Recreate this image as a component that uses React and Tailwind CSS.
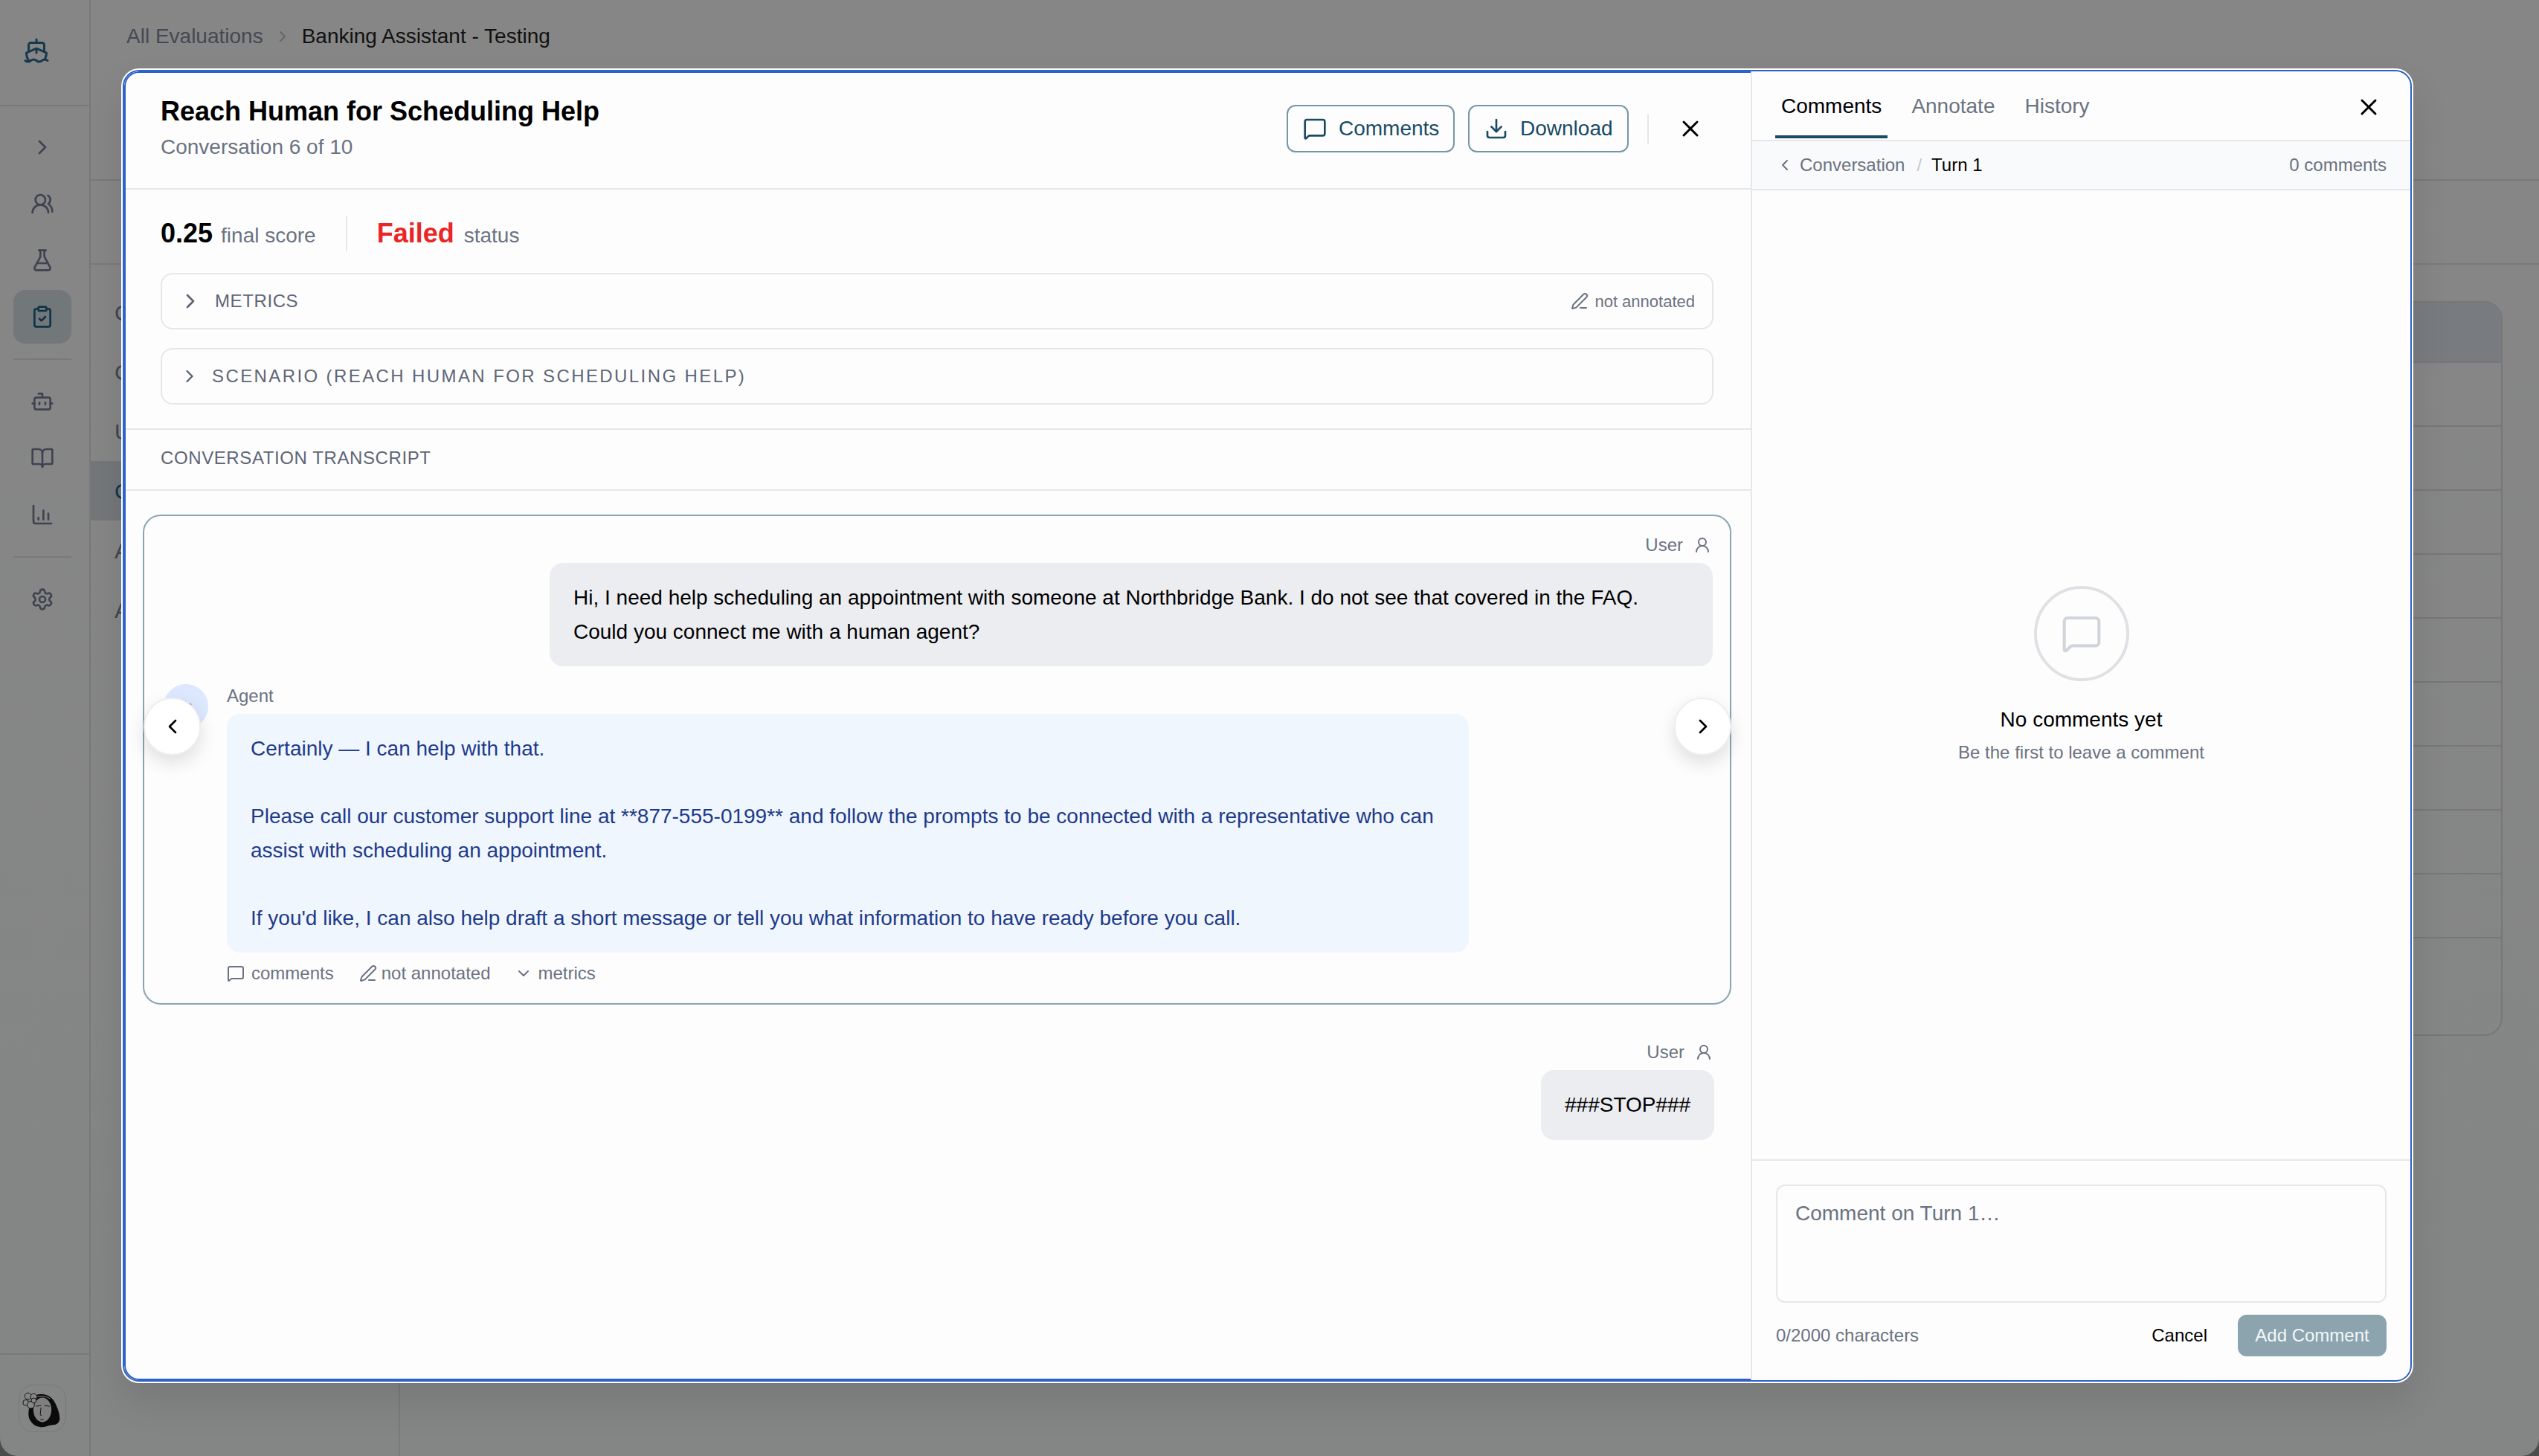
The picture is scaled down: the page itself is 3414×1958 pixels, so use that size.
import {
  Ship, ChevronRight, ChevronLeft, ChevronDown, UsersRound, FlaskConical, ClipboardCheck, Bot, BookOpen, Settings,
  MessageSquare, Download, X, PenLine, UserRound,
} from 'lucide-react'

// only the first letter of each row shows next to the modal
const listRows = [
  { label: 'C' },
  { label: 'C' },
  { label: 'U' },
  { label: 'C', active: true },
  { label: 'A' },
  { label: 'A' },
]

function NavItem({ children, active }) {
  return (
    <div className={`w-[78px] h-[72px] rounded-[16px] flex items-center justify-center ${active ? 'bg-[#727779] text-[#0f3347]' : 'text-[#3f4350]'}`}>
      {children}
    </div>
  )
}

function ChartIcon() {
  return (
    <svg width="32" height="32" viewBox="0 0 24 24" fill="none" stroke="currentColor" strokeWidth="2" strokeLinecap="round" strokeLinejoin="round">
      <path d="M3 3v16a2 2 0 0 0 2 2h16" />
      <path d="M8 17v-2" />
      <path d="M13 17V8" />
      <path d="M18 17v-6" />
    </svg>
  )
}

function Avatar() {
  return (
    <div className="w-[64px] h-[64px] rounded-[20px] border border-[#777] overflow-hidden">
      <svg width="62" height="62" viewBox="0 0 64 64">
        <path d="M30 12c-9 0-15 7-16 16-1 8-3 15 2 22 4 6 10 8 16 8 5 0 9-3 14-3 6 0 10-3 10-9 0-8-3-14-6-21-4-8-10-13-20-13z" fill="#0a0a0a" />
        <ellipse cx="32" cy="34" rx="12.5" ry="17" fill="#7f7f7f" />
        <path d="M20 18c4-4 18-4 23 1" fill="none" stroke="#8a8a8a" strokeWidth="1" />
        <path d="M23 29l7-1M35 28l7 1M30 31l-1 10 2 1M29 47c2 1 4 1 5 0" fill="none" stroke="#111" strokeWidth="1" />
        <g fill="#868686" stroke="#111" strokeWidth="1">
          <circle cx="12" cy="15" r="4.5" />
          <circle cx="20" cy="16" r="4.5" />
          <circle cx="9" cy="24" r="4" />
          <circle cx="16" cy="27" r="5" />
          <circle cx="20" cy="21" r="3.5" />
        </g>
      </svg>
    </div>
  )
}

function Background() {
  return (
    <div className="flex w-full h-full">
      <aside className="w-[122px] shrink-0 border-r-2 border-[#797979] flex flex-col">
        <div className="w-full h-[143px] shrink-0 border-b-2 border-[#797979] pl-[31px] pt-[50px] text-[#17394c]">
          <Ship size={36} />
        </div>
        <div className="flex-1 pl-[18px] flex flex-col items-start">
          <div className="mt-[39px] ml-[23px] h-[32px] text-[#3f4350]"><ChevronRight size={32} /></div>
          <div className="mt-[24px] flex flex-col gap-[4px]">
            <NavItem><UsersRound size={32} /></NavItem>
            <NavItem><FlaskConical size={32} /></NavItem>
            <NavItem active><ClipboardCheck size={32} /></NavItem>
          </div>
          <div className="w-[78px] h-[2px] bg-[#797979] my-[20px]" />
          <div className="flex flex-col gap-[4px]">
            <NavItem><Bot size={32} /></NavItem>
            <NavItem><BookOpen size={32} /></NavItem>
            <NavItem><ChartIcon /></NavItem>
          </div>
          <div className="w-[78px] h-[2px] bg-[#797979] my-[20px]" />
          <NavItem><Settings size={32} /></NavItem>
        </div>
        <div className="w-full h-[138px] shrink-0 border-t-2 border-[#797979] pt-[40px] pl-[25px]">
          <Avatar />
        </div>
      </aside>

      <main className="flex-1 flex flex-col">
        <div className="h-[243px] shrink-0 border-b-2 border-[#797979] pl-[48px] pt-[30px] flex items-start gap-[14px] text-[28px] leading-[38px]">
          <span className="text-[#454854]">All Evaluations</span>
          <ChevronRight size={24} className="mt-[7px] text-[#666]" />
          <span className="text-[#111]">Banking Assistant - Testing</span>
        </div>
        <div className="h-[113px] shrink-0 border-b-2 border-[#797979]" />
        <div className="flex-1 flex">
          <div className="w-[416px] border-r-2 border-[#797979] pt-[24px]">
            {listRows.map((row, i) => (
              <div key={i} className={`h-[80px] pl-[32px] flex items-center text-[30px] ${row.active ? 'bg-[#73777a] text-[#0f3347]' : 'text-[#3f4350]'}`}>
                {row.label}
              </div>
            ))}
          </div>
          <div className="flex-1 pr-[49px] pl-[40px] pt-[49px]">
            <div className="h-[988px] rounded-[24px] border-2 border-[#777] overflow-hidden">
              <div className="h-[81px] bg-[#787b7f] border-b-2 border-[#777]" />
              {[0, 1, 2, 3, 4, 5, 6, 7, 8].map((i) => (
                <div key={i} className="h-[86px] border-b-2 border-[#777]" />
              ))}
            </div>
          </div>
        </div>
      </main>
    </div>
  )
}

function MetaRow() {
  return (
    <div className="mt-[12px] h-[32px] flex items-center text-[24px] text-[#6b7280]">
      <MessageSquare size={24} />
      <span className="ml-[9px]">comments</span>
      <PenLine size={24} className="ml-[34px]" />
      <span className="ml-[6px]">not annotated</span>
      <ChevronDown size={24} className="ml-[32px]" />
      <span className="ml-[8px]">metrics</span>
    </div>
  )
}

function UserLabel() {
  return (
    <div className="h-[30px] pr-[2px] flex items-center justify-end gap-[14px] text-[24px] text-[#6b7280]">
      <span>User</span>
      <UserRound size={24} />
    </div>
  )
}

function NavButton({ side, children }) {
  return (
    <button className={`absolute top-[244px] w-[77px] h-[78px] rounded-full bg-white border-2 border-[#eceef0] shadow-[0_10px_24px_rgba(0,0,0,0.12)] flex items-center justify-center text-black ${side}`}>
      {children}
    </button>
  )
}

function ConversationPanel() {
  return (
    <section className="w-[2187px] shrink-0 flex flex-col border-l-2 border-t-2 border-b-2 border-[#2d62c9] rounded-l-[20px] overflow-hidden">
      {/* header */}
      <div className="h-[157px] shrink-0 border-b-2 border-[#e5e7eb] pl-[47px] pr-[63px] pt-[30px] flex items-start justify-between">
        <div>
          <h1 className="text-[36px] leading-[44px] font-bold text-black">Reach Human for Scheduling Help</h1>
          <p className="mt-[8px] text-[28px] leading-[36px] text-[#6b7280]">Conversation 6 of 10</p>
        </div>
        <div className="mt-[13px] flex items-center">
          <button className="h-[64px] w-[226px] rounded-[12px] border-2 border-[#7596a8] flex items-center pl-[20px] gap-[16px] text-[28px] text-[#194b63]">
            <MessageSquare size={32} />
            Comments
          </button>
          <button className="ml-[18px] h-[64px] w-[216px] rounded-[12px] border-2 border-[#7596a8] flex items-center pl-[20px] gap-[16px] text-[28px] text-[#194b63]">
            <Download size={32} />
            Download
          </button>
          <div className="ml-[25px] w-[2px] h-[40px] bg-[#e5e7eb]" />
          <X size={36} className="ml-[38px] text-black" />
        </div>
      </div>

      {/* score + collapsibles */}
      <div className="h-[323px] shrink-0 border-b-2 border-[#e5e7eb] pl-[47px] pr-[50px] pt-[35px]">
        <div className="h-[48px] flex items-center">
          <div className="flex items-baseline gap-[11px]">
            <span className="text-[36px] font-bold text-black">0.25</span>
            <span className="text-[28px] text-[#6b7280]">final score</span>
          </div>
          <div className="mx-[40px] w-[2px] h-[48px] bg-[#e5e7eb]" />
          <div className="flex items-baseline gap-[13px]">
            <span className="text-[36px] font-bold text-[#ea2525]">Failed</span>
            <span className="text-[28px] text-[#6b7280]">status</span>
          </div>
        </div>
        <div className="mt-[29px] h-[76px] rounded-[16px] border-2 border-[#e5e7eb] pl-[22px] pr-[23px] flex items-center justify-between">
          <div className="flex items-center gap-[17px] text-[24px] tracking-wide text-[#5f6575]">
            <ChevronRight size={32} />
            <span>METRICS</span>
          </div>
          <div className="flex items-center gap-[8px] text-[22px] text-[#6b7280]">
            <PenLine size={24} />
            <span>not annotated</span>
          </div>
        </div>
        <div className="mt-[25px] h-[76px] rounded-[16px] border-2 border-[#e5e7eb] pl-[23px] flex items-center gap-[16px] text-[24px] tracking-[0.1em] text-[#5f6575]">
          <ChevronRight size={28} />
          <span>SCENARIO (REACH HUMAN FOR SCHEDULING HELP)</span>
        </div>
      </div>

      <div className="h-[82px] shrink-0 border-b-2 border-[#e5e7eb] pl-[47px] pb-[4px] flex items-center text-[24px] tracking-wide text-[#5f6575]">
        CONVERSATION TRANSCRIPT
      </div>

      {/* transcript */}
      <div className="flex-1 pt-[32px] pl-[23px] pr-[26px] overflow-hidden">
        <div className="relative h-[659px] rounded-[24px] border-2 border-[#8aa5b2] pl-[26px] pr-[23px] pt-[24px]">
          <UserLabel />
          <div className="mt-[9px] ml-auto w-[1564px] rounded-[18px] bg-[#ecedf1] px-[32px] py-[24px] text-[28px] leading-[45.5px] text-black">
            Hi, I need help scheduling an appointment with someone at Northbridge Bank. I do not see that covered in the FAQ. Could you connect me with a human agent?
          </div>
          <div className="mt-[24px] flex gap-[25px]">
            <div className="w-[60px] h-[60px] shrink-0 rounded-full bg-[#dbe8fd] flex items-center justify-center text-[#3b66e0]">
              <Bot size={20} />
            </div>
            <div>
              <div className="h-[30px] mt-[1px] flex items-center text-[24px] text-[#6b7280]">Agent</div>
              <div className="mt-[9px] w-[1670px] rounded-[18px] bg-[#f0f6fe] px-[32px] py-[24px] text-[28px] leading-[45.5px] text-[#1e3a8a] whitespace-pre-wrap">
                {"Certainly \u2014 I can help with that.\n\nPlease call our customer support line at **877-555-0199** and follow the prompts to be connected with a representative who can assist with scheduling an appointment.\n\nIf you'd like, I can also help draft a short message or tell you what information to have ready before you call."}
              </div>
              <MetaRow />
            </div>
          </div>
          <NavButton side="-left-[1px]"><ChevronLeft size={32} /></NavButton>
          <NavButton side="-right-[2px]"><ChevronRight size={32} /></NavButton>
        </div>
        <div className="mt-[49px] pr-[23px]">
          <UserLabel />
          <div className="mt-[9px] ml-auto w-[233px] rounded-[18px] bg-[#ecedf1] px-[32px] py-[24px] text-[28px] leading-[45.5px] text-black">
            ###STOP###
          </div>
        </div>
      </div>
    </section>
  )
}

function CommentsPanel() {
  return (
    <section className="flex-1 min-w-0 flex flex-col border-l-2 border-[#e5e7eb]">
      <div className="h-[94px] shrink-0 border-b-2 border-[#e5e7eb] pl-[31px] pr-[38px] flex justify-between">
        <div className="flex gap-[24px] text-[28px] text-[#6b7280]">
          <div className="h-[90px] px-[8px] pt-[26px] border-b-[4px] border-[#194b63] text-black">Comments</div>
          <div className="h-[90px] px-[8px] pt-[26px]">Annotate</div>
          <div className="h-[90px] px-[8px] pt-[26px]">History</div>
        </div>
        <X size={36} className="mt-[30px] text-black" />
      </div>
      <div className="h-[66px] shrink-0 bg-[#f9fafb] border-b-2 border-[#e5e7eb] pl-[32px] pr-[32px] flex items-center justify-between text-[24px]">
        <div className="flex items-center text-[#6b7280]">
          <ChevronLeft size={24} />
          <span className="ml-[8px]">Conversation</span>
          <span className="ml-[16px] text-[#c4c7cf]">/</span>
          <span className="ml-[13px] text-black">Turn 1</span>
        </div>
        <span className="text-[#6b7280]">0 comments</span>
      </div>
      <div className="flex-1 flex flex-col items-center pt-[532px]">
        <div className="w-[128px] h-[128px] rounded-full border-4 border-[#e0e1e5] flex items-center justify-center text-[#d1d5db]">
          <MessageSquare size={56} strokeWidth={1.75} />
        </div>
        <p className="mt-[32px] text-[28px] leading-[40px] text-black">No comments yet</p>
        <p className="mt-[8px] text-[24px] leading-[32px] text-[#6b7280]">Be the first to leave a comment</p>
      </div>
      <div className="h-[297px] shrink-0 border-t-2 border-[#e5e7eb] px-[32px] pt-[32px]">
        <div className="h-[159px] rounded-[12px] border-2 border-[#e5e7eb] px-[24px] pt-[18px] text-[28px] leading-[38px] text-[#6b7280]">
          Comment on Turn 1…
        </div>
        <div className="mt-[16px] h-[56px] flex items-center justify-between text-[24px]">
          <span className="text-[#6b7280]">0/2000 characters</span>
          <div className="flex items-center gap-[41px]">
            <button className="text-black">Cancel</button>
            <button className="w-[200px] h-[56px] rounded-[12px] bg-[#8ba4ae] text-[#f5f7f8]">Add Comment</button>
          </div>
        </div>
      </div>
    </section>
  )
}

export default function App() {
  return (
    <div className="w-[3414px] h-[1958px] bg-[#4c4c4c] font-['Liberation_Sans',sans-serif] overflow-hidden">
      <div className="relative w-full h-full rounded-b-[24px] overflow-hidden bg-linear-to-b from-[#868686] to-[#848685]">
        <Background />
        <div className="absolute left-[163px] top-[92px] w-[3082px] h-[1768px] rounded-[24px] border-2 border-white shadow-[0_25px_50px_rgba(0,0,0,0.1)] overflow-hidden">
          <div className="w-full h-full flex rounded-[22px] border-2 border-[#2d62c9] bg-[#fdfdfe] overflow-hidden">
            <ConversationPanel />
            <CommentsPanel />
          </div>
        </div>
      </div>
    </div>
  )
}
